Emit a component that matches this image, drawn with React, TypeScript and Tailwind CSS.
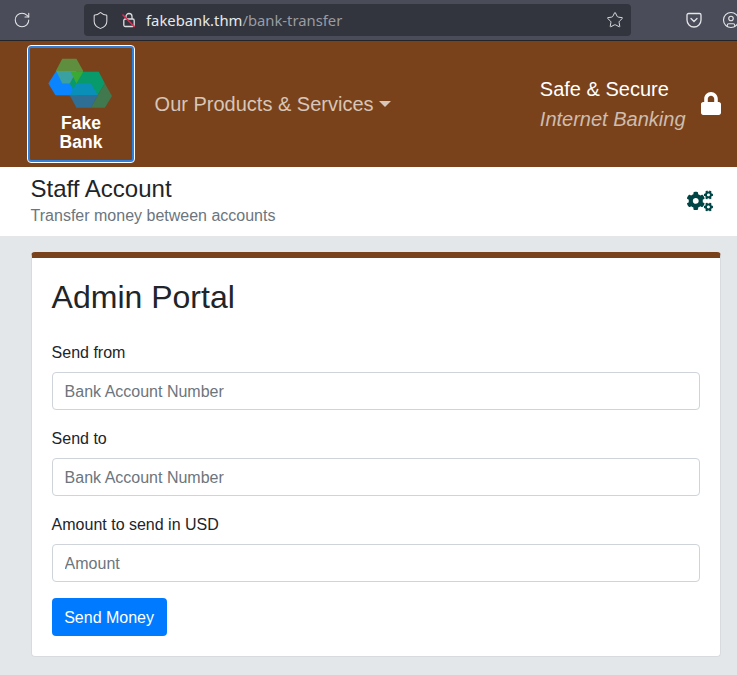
import { FaCogs, FaLock } from 'react-icons/fa';
import { RotateCw, Shield, Star, CircleUser } from 'lucide-react';

function BrowserBar() {
  return (
    <div className="flex h-[41px] items-center overflow-hidden border-b border-[#24252b] bg-[#4a4c59]">
      <RotateCw className="ml-[13px] h-[18px] w-[18px] shrink-0 text-[#e4e5e8]" strokeWidth={1.4} />
      <div className="ml-[53px] flex h-[32px] w-[547px] shrink-0 items-center rounded-[4px] bg-[#32353d]">
        <Shield className="ml-[7px] h-[19px] w-[19px] text-[#dcdde0]" strokeWidth={1.3} />
        <svg className="ml-[11px] h-[16px] w-[16px]" viewBox="0 0 16 16" fill="none">
          <path d="M5 7V4.5a3 3 0 0 1 6 0V7" stroke="#dcdde0" strokeWidth="1.3" />
          <rect x="2.8" y="7" width="10.4" height="7.5" rx="1.5" stroke="#dcdde0" strokeWidth="1.3" />
          <path d="M1.5 2.5 13.5 15" stroke="#e22850" strokeWidth="1.5" />
        </svg>
        <div className="ml-[9px] font-['Noto_Sans',sans-serif] text-[14.8px] text-[#e8e9eb]">
          fakebank.thm<span className="text-[#9a9ca3]">/bank-transfer</span>
        </div>
        <Star className="mr-[7px] ml-auto h-[18px] w-[18px] text-[#dcdde0]" strokeWidth={1.3} />
      </div>
      <svg className="ml-[55px] h-[16px] w-[16px] shrink-0" viewBox="0 0 16 16" fill="none">
        <path d="M2.5 1.5h11A1.5 1.5 0 0 1 15 3v5a7 7 0 0 1-14 0V3a1.500 1.500 0 0 1 1.500-1.500Z" stroke="#e4e5e8" strokeWidth="1.3" />
        <path d="m5 6.500 3 3 3-3" stroke="#e4e5e8" strokeWidth="1.300" strokeLinecap="round" />
      </svg>
      <CircleUser className="ml-[20px] h-[18px] w-[18px] shrink-0 text-[#e4e5e8]" strokeWidth={1.5} />
    </div>
  );
}

function Logo() {
  return (
    <svg className="mr-[2px] h-[51px] w-[66px]" viewBox="145 175 195 150">
      <polygon points="190,177 232,177 252,213 232,250 190,250 171,213" fill="#5f8f3e" />
      <polygon points="298,215 316,250 295,285 212,285 212,250 232,215" fill="#089a6b" />
      <polygon points="316,250 337,287 316,322 275,322 295,285" fill="#42784e" />
      <polygon points="232,285 295,285 275,322 232,322 212,285" fill="#2f6f95" />
      <polygon points="172,213 149,250 170,285 232,285 212,250 190,213" fill="#0a84ff" />
      <polygon points="172,213 232,213 212,250 190,250" fill="#3aa0a0" />
      <polygon points="215,215 252,215 232,250" fill="#3aaa35" />
      <polygon points="232,250 275,250 295,285 212,285" fill="#0a90b8" />
    </svg>
  );
}

function Field({ label, placeholder }: { label: string; placeholder: string }) {
  return (
    <div className="mb-4">
      <label className="mb-[7px] block pt-px text-[16px] leading-[24px] text-[#212529]">{label}</label>
      <input
        placeholder={placeholder}
        className="block h-[38px] w-full rounded-[4px] border border-[#ced4da] bg-white px-3 pt-[2px] text-[16px] text-[#495057] placeholder:text-[#6c757d]"
      />
    </div>
  );
}

export default function App() {
  return (
    <div className="min-h-[675px] bg-[#e4e7ea] font-['Liberation_Sans',sans-serif]">
      <BrowserBar />

      <nav className="flex h-[126px] items-center bg-[#7a421b] pl-[28px]">
        <div className="flex h-[116px] w-[106px] flex-col items-center rounded-[3px] border-2 border-[#2f80dc] pt-[10px] outline outline-1 outline-white">
          <Logo />
          <div className="mt-[5px] text-center text-[17.500px] leading-[19px] font-bold text-white">
            Fake
            <br />
            Bank
          </div>
        </div>
        <div className="ml-[20.600px] flex items-center text-[20px] text-[#d7c6b9]">
          Our Products &amp; Services
          <span className="ml-[5px] h-0 w-0 border-x-[6px] border-t-[6px] border-x-transparent border-t-[#d7c6b9]" />
        </div>
        <div className="ml-auto text-[20px] leading-[30px]">
          <div className="text-white">Safe &amp; Secure</div>
          <div className="text-[#cdbdb0] italic">Internet Banking</div>
        </div>
        <FaLock className="mr-[16px] mb-[2px] ml-[15.500px] h-[23px] w-[20px] text-white" />
      </nav>

      <div className="flex items-center justify-between bg-white py-2 pr-[24px] pl-[30.600px]">
        <div>
          <div className="text-[24px] leading-[28.8px] text-[#212529]">Staff Account</div>
          <div className="text-[16px] leading-[24px] text-[#6c757d]">Transfer money between accounts</div>
        </div>
        <FaCogs className="h-[26px] w-[26px] text-[#004545]" />
      </div>

      <div className="pt-4 pr-4 pb-[18px] pl-[30.600px]">
        <div className="rounded-[4px] border border-t-[6px] border-[#d8dbde] border-t-[#7a421b] bg-white p-5">
          <h2 className="mb-6 text-[32px] leading-[38.4px] text-[#212529]">Admin Portal</h2>
          <Field label="Send from" placeholder="Bank Account Number" />
          <Field label="Send to" placeholder="Bank Account Number" />
          <Field label="Amount to send in USD" placeholder="Amount" />
          <button className="h-[38px] w-[115px] rounded-[4px] bg-[#007bff] pt-[2px] text-[16px] text-white">Send Money</button>
        </div>
      </div>
    </div>
  );
}
